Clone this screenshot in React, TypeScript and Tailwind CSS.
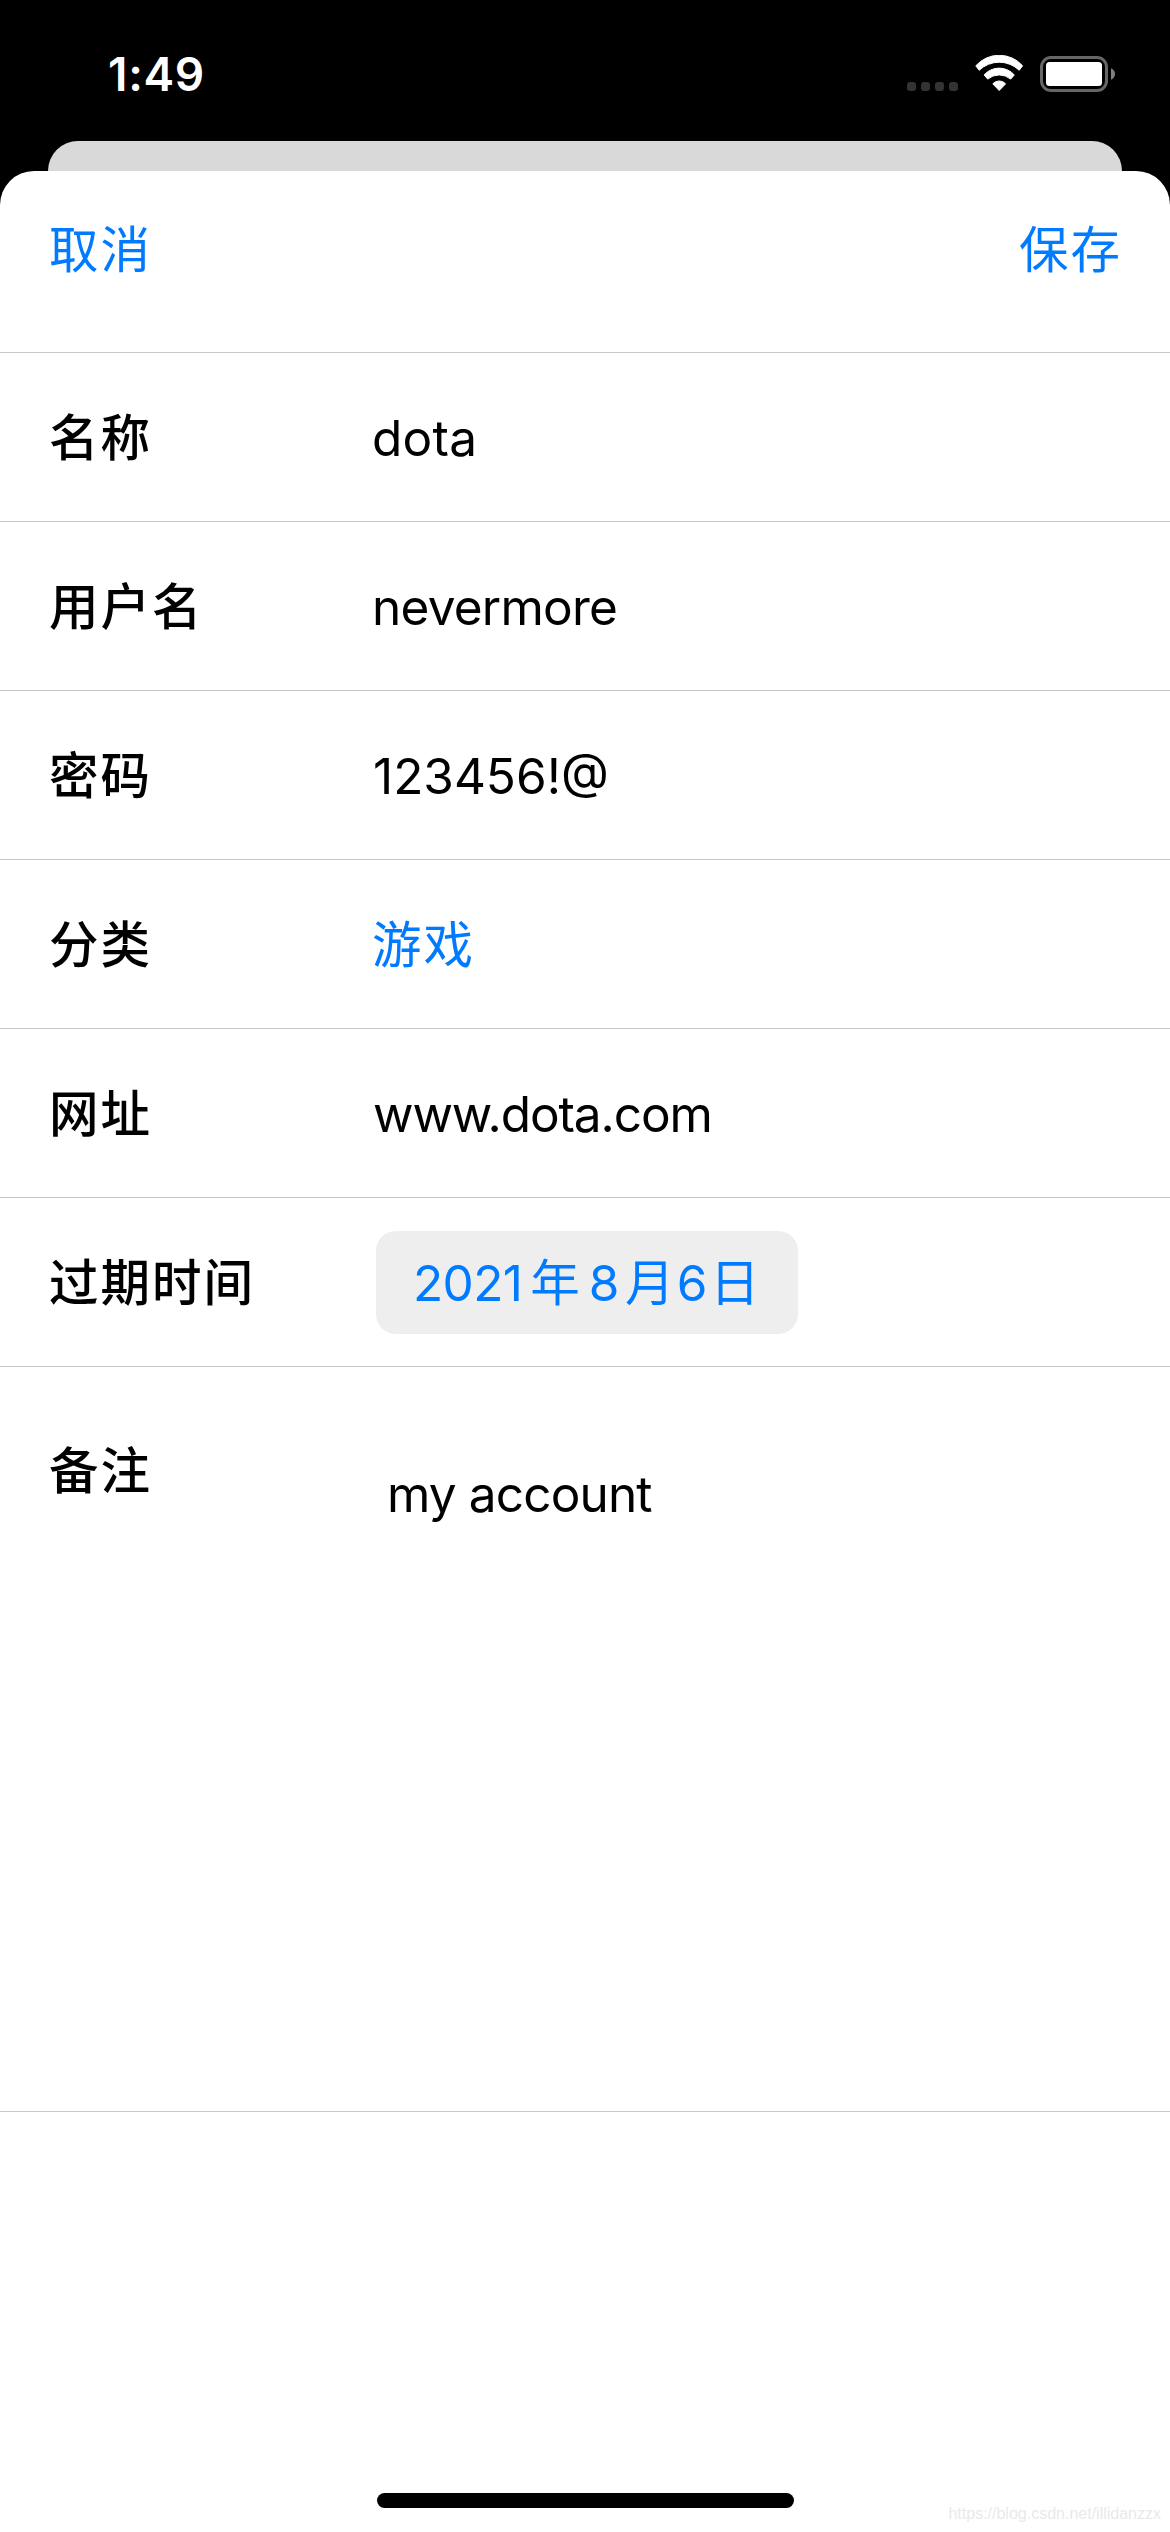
import type { ReactNode } from "react";

function WifiIcon() {
  return (
    <svg width="49" height="37" viewBox="0 0 49 37" fill="#fff" stroke="#fff" strokeWidth="1" strokeLinejoin="round">
      <path d="M0.8 10.8A31.2 31.2 0 0 1 47.6 10.8L44.2 15.3A28.8 28.8 0 0 0 4.2 15.3Z" />
      <path d="M9.1 19.9A20.2 20.2 0 0 1 39.3 19.9L35.7 24.1A18 18 0 0 0 12.7 24.1Z" />
      <path d="M17.8 28.8A8.6 8.6 0 0 1 30.6 28.8L24.2 35.5Z" />
    </svg>
  );
}

function BatteryIcon() {
  return (
    <svg width="75" height="36" viewBox="0 0 75 36" fill="none">
      <rect x="1.5" y="1.5" width="65" height="33" rx="9.5" stroke="#666" strokeWidth="3" />
      <rect x="6" y="6" width="56" height="24" rx="3.5" fill="#fff" />
      <path d="M71 12.3C73.4 13.2 75 15.4 75 18S73.4 22.8 71 23.7Z" fill="#808080" />
    </svg>
  );
}

function StatusBar() {
  return (
    <header className="flex h-[141px] items-center justify-between pt-[7px] pr-[55px] pl-[108px] text-white">
      <span className="text-[46px] leading-[56px] font-semibold tracking-[0.7px]">1:49</span>
      <div className="flex items-center">
        <div className="mt-[25px] mr-[17px] flex gap-[5px]">
          <i className="size-[9px] rounded-[3px] bg-[#333]" />
          <i className="size-[9px] rounded-[3px] bg-[#333]" />
          <i className="size-[9px] rounded-[3px] bg-[#333]" />
          <i className="size-[9px] rounded-[3px] bg-[#333]" />
        </div>
        <div className="mr-4 -mt-px">
          <WifiIcon />
        </div>
        <BatteryIcon />
      </div>
    </header>
  );
}

function Label({ children }: { children: ReactNode }) {
  return <span className="w-[323px] shrink-0 font-medium tracking-[2px]">{children}</span>;
}

function Row({ label, children }: { label: string; children: ReactNode }) {
  return (
    <div className="flex h-[169px] items-center border-b border-[#c6c6c8] pt-[2px] pl-[49px]">
      <Label>{label}</Label>
      {children}
    </div>
  );
}

export default function App() {
  return (
    <div className="flex h-[2532px] w-[1170px] flex-col overflow-hidden bg-black font-[Inter,'Noto_Sans_CJK_SC',sans-serif] text-[49.5px] leading-[60px] whitespace-nowrap text-black">
      <StatusBar />
      <div className="mx-12 h-[30px] shrink-0 rounded-t-[30px] bg-[#d9d9d9]" />
      <main className="relative flex flex-1 flex-col rounded-t-[34px] bg-white">
        <div className="flex h-[182px] shrink-0 items-start justify-between border-b border-[#c6c6c8] pt-[49px] pr-12 pl-[49px] tracking-[2px] text-[#007aff]">
          <button>取消</button>
          <button>保存</button>
        </div>

        <Row label="名称">
          <span className="tracking-[0.3px]">dota</span>
        </Row>
        <Row label="用户名">
          <span className="tracking-[-0.75px]">nevermore</span>
        </Row>
        <Row label="密码">
          <span className="ml-px">123456!@</span>
        </Row>
        <Row label="分类">
          <button className="tracking-[2px] text-[#007aff]">游戏</button>
        </Row>
        <Row label="网址">
          <span className="ml-px tracking-[-1.1px]">www.dota.com</span>
        </Row>
        <Row label="过期时间">
          <button className="-mt-px ml-1 flex h-[103px] w-[422px] items-center rounded-[20px] bg-[#eeeeee] pl-[37px] text-[#007aff]">
            <span className="tracking-[-0.6px]">2021</span>
            <span className="ml-2">年</span>
            <span className="ml-[9px]">8</span>
            <span className="ml-[5.6px]">月</span>
            <span className="ml-[2.3px]">6</span>
            <span className="ml-[2.4px]">日</span>
          </button>
        </Row>

        <div className="flex h-[745px] shrink-0 items-start border-b border-[#c6c6c8] pt-[74px] pl-[49px]">
          <Label>备注</Label>
          <p className="mt-[23px] ml-[15px] tracking-[-0.85px]">my account</p>
        </div>

        <div className="mt-auto mb-6 h-[15px] w-[417px] self-center rounded-full bg-black" />
        <span className="absolute right-[9px] bottom-[6px] font-['Liberation_Sans',Arial,sans-serif] text-base leading-6 text-[#e9e9e9]">
          https://blog.csdn.net/illidanzzx
        </span>
      </main>
    </div>
  );
}
